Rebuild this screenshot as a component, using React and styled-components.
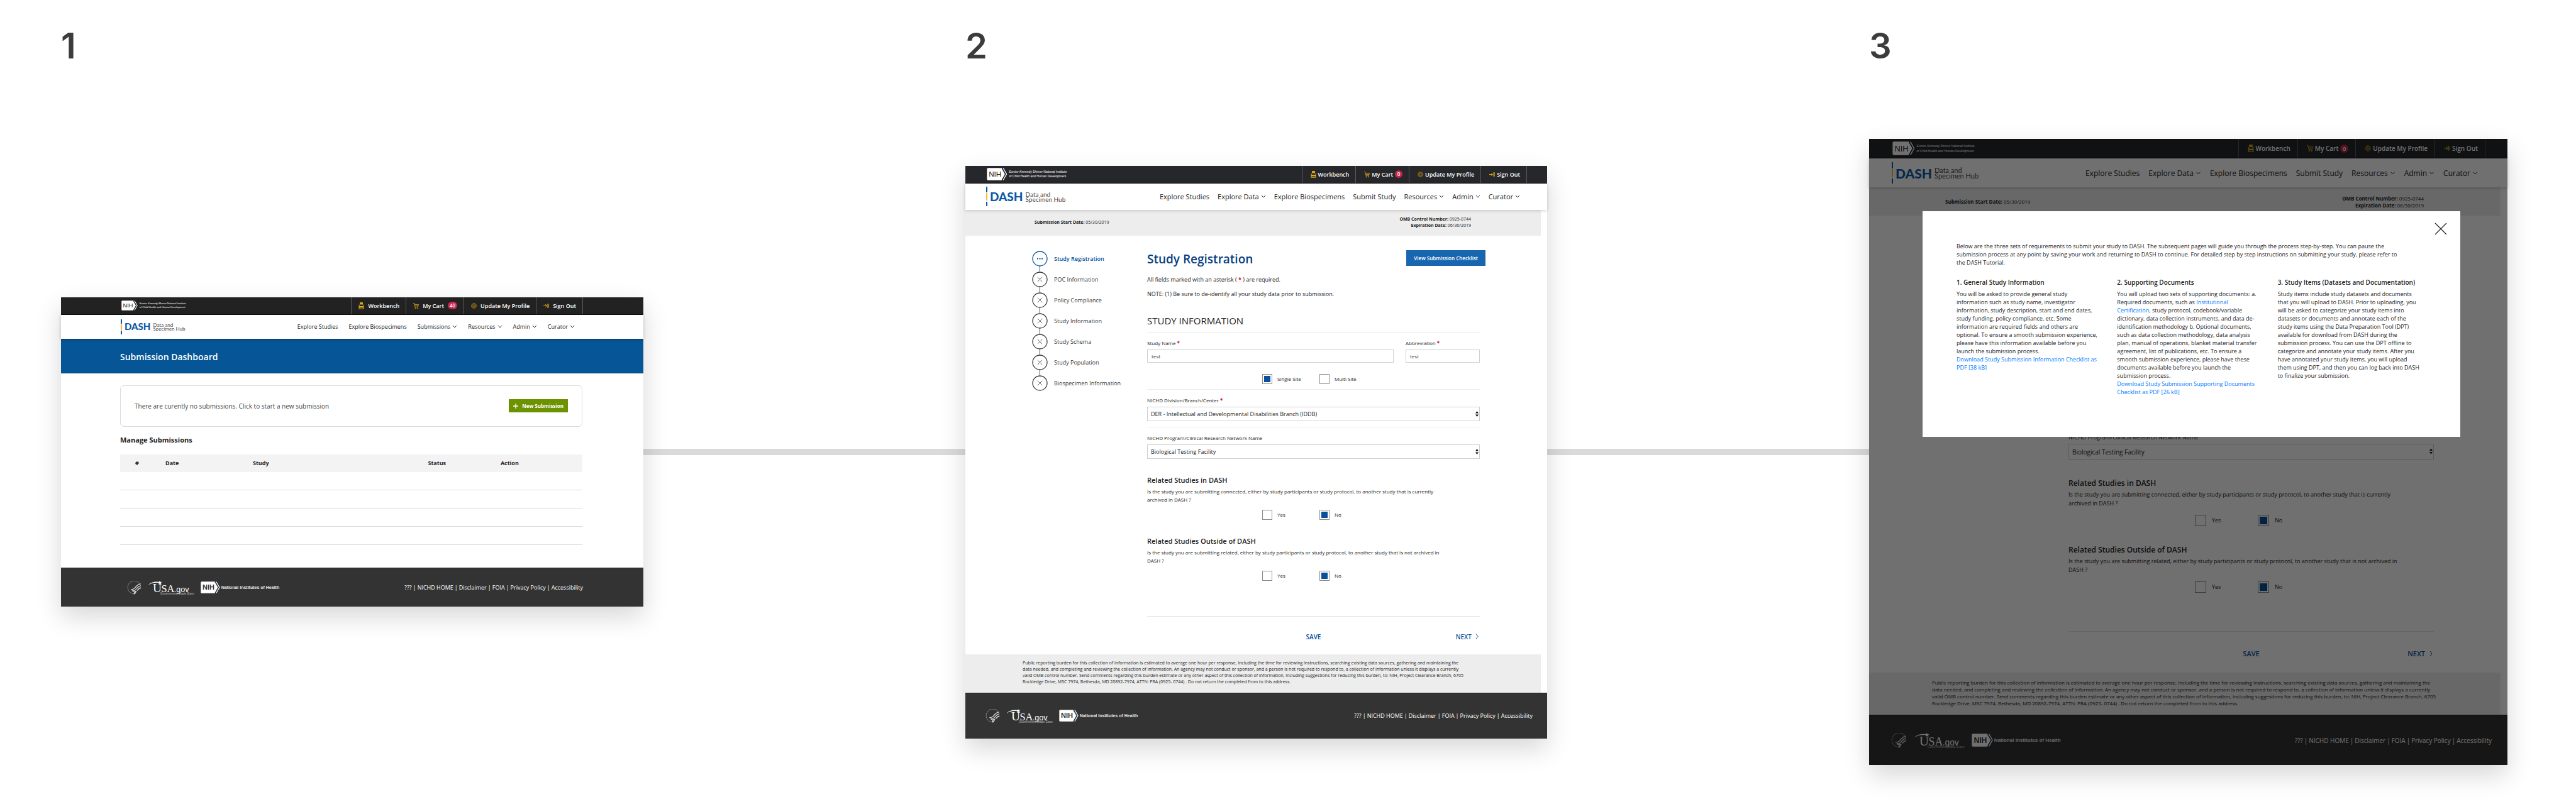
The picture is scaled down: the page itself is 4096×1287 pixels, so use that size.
import React, { useId, useState } from 'react'
import styled, { createGlobalStyle, ThemeProvider } from 'styled-components'

// whole pixel size, scaled for the panel it is used in
const u = (n) => ({ theme }) => `${Math.round(n * theme.scale)}px`

const dashboardTheme = {
  scale: 1,
  topBg: '#222222',
  left: 95,
  right: 96,
  itemLeft: 11,
  itemGap: 6,
  nihHeight: 16,
  nihFont: 4,
  navHeight: 38,
  navFont: 9,
  navGap: 17,
  navRight: 109,
  dashFont: 15,
  dashSub: 8,
  dashBar: 24,
  footerHeight: 62,
  footerLeft: 105,
  footerRight: 96,
}

const formTheme = {
  scale: 1,
  topBg: '#26272a',
  left: 33,
  right: 32,
  itemLeft: 13,
  itemGap: 3,
  nihHeight: 20,
  nihFont: 5,
  navHeight: 42,
  navFont: 11,
  navGap: 13,
  navRight: 43,
  dashFont: 19,
  dashSub: 10,
  dashBar: 31,
  footerHeight: 73,
  footerLeft: 32,
  footerRight: 23,
}

const modalTheme = { ...formTheme, scale: 1.097 }

const Global = createGlobalStyle`
  * { box-sizing: border-box; }
  body {
    margin: 0;
    background: #fff;
    font-family: "Open Sans", "Noto Sans", sans-serif;
    color: #222;
  }
  h1, h2, h3, p, ol { margin: 0; padding: 0; }
  button, input, select { font-family: inherit; color: inherit; }
  a { text-decoration: none; color: inherit; }
`

const Board = styled.main`
  display: grid;
  grid-template-columns: 97fr 926fr 512fr 925fr 512fr 1015fr 109fr;
  row-gap: 126px;
  align-items: center;
  padding: 51px 0 66px;
`

const Step = styled.h2`
  grid-column: ${(props) => props.$col};
  font-family: Inter, sans-serif;
  font-size: 56px;
  line-height: 44px;
  font-weight: 600;
  color: #3c3c3c;
`

const Connector = styled.div`
  grid-column: ${(props) => props.$col};
  grid-row: 2;
  height: 10px;
  background: #dadada;
`

const Panel = styled.section`
  grid-column: ${(props) => props.$col};
  grid-row: 2;
  position: relative;
  min-width: 0;
  background: #fff;
  box-shadow: 0 16px 38px rgba(0, 0, 0, 0.16);
`

/* top bar */

const TopBar = styled.div`
  display: flex;
  justify-content: space-between;
  height: ${u(28)};
  padding-left: ${({ theme }) => u(theme.left + 1)({ theme })};
  padding-right: ${({ theme }) => u(theme.right)({ theme })};
  background: ${({ theme }) => theme.topBg};
  border-bottom: 1px solid #0c0c0c;
  color: #fff;
`

const Institute = styled.a`
  display: flex;
  align-items: center;
  gap: ${u(3)};
  font-family: "Liberation Sans", Arial, sans-serif;
  font-size: ${({ theme }) => u(theme.nihFont)({ theme })};
  line-height: ${({ theme }) => u(theme.nihFont + 2)({ theme })};

  svg {
    height: ${({ theme }) => u(theme.nihHeight)({ theme })};
    width: auto;
  }
`

const TopLinks = styled.nav`
  display: flex;
  border-right: 1px solid #5a5a5a;
`

const TopLink = styled.a`
  display: flex;
  align-items: center;
  gap: ${({ theme }) => u(theme.itemGap)({ theme })};
  padding: 0 ${u(10)} 0 ${({ theme }) => u(theme.itemLeft)({ theme })};
  border-left: 1px solid #5a5a5a;
  font-size: ${u(9)};
  font-weight: 600;
  white-space: nowrap;

  svg {
    width: ${u(9)};
    height: ${u(11)};
  }
`

const Badge = styled.span`
  min-width: ${u(12)};
  height: ${u(12)};
  line-height: ${u(12)};
  padding: 0 ${u(3)};
  border-radius: ${u(6)};
  background: #c4264c;
  font-size: ${u(8)};
  text-align: center;
`

/* main navigation */

const NavBar = styled.header`
  position: relative;
  display: flex;
  align-items: center;
  justify-content: space-between;
  height: ${({ theme }) => u(theme.navHeight)({ theme })};
  padding-left: ${({ theme }) => u(theme.left)({ theme })};
  padding-right: ${({ theme }) => u(theme.navRight)({ theme })};
  background: #fff;
  box-shadow: 0 1px 5px rgba(0, 0, 0, 0.2);
`

const Logo = styled.a`
  display: flex;
  align-items: center;
  gap: ${u(4)};
  font-family: Lato, sans-serif;
  color: #4a4a4a;
  font-size: ${({ theme }) => u(theme.dashSub)({ theme })};
  line-height: ${({ theme }) => u(theme.dashSub - 2)({ theme })};

  strong {
    color: #0b5aa6;
    font-weight: 900;
    font-size: ${({ theme }) => u(theme.dashFont)({ theme })};
    line-height: 1;
  }
`

const LogoBar = styled.i`
  width: 2px;
  height: ${({ theme }) => u(theme.dashBar)({ theme })};
  background: linear-gradient(#0b5aa6 0 29%, #fff 29% 33%, #f7bd36 33% 72%, #fff 72% 76%, #0b5aa6 76%);
`

const Menu = styled.nav`
  display: flex;
  gap: ${({ theme }) => u(theme.navGap)({ theme })};
  font-size: ${({ theme }) => u(theme.navFont)({ theme })};
  white-space: nowrap;

  a {
    display: flex;
    align-items: center;
    gap: ${u(3)};
  }

  svg {
    width: ${u(8)};
    height: ${u(5)};
  }
`

/* footer */

const FooterBar = styled.footer`
  display: flex;
  align-items: center;
  justify-content: space-between;
  height: ${({ theme }) => u(theme.footerHeight)({ theme })};
  padding-left: ${({ theme }) => u(theme.footerLeft)({ theme })};
  padding-right: ${({ theme }) => u(theme.footerRight)({ theme })};
  background: #333;
  border-top: 1px solid #222;
  color: #fff;
`

const FooterLogos = styled.div`
  display: flex;
  align-items: center;
  gap: ${u(10)};
`

const Health = styled.a`
  display: flex;
  align-items: center;
  gap: ${u(2)};
  font-family: "Liberation Sans", Arial, sans-serif;
  font-size: ${u(7)};
  font-weight: 700;
  color: #e8e8e8;

  svg {
    width: auto;
    height: ${u(19)};
  }
`

const FooterLinks = styled.nav`
  display: flex;
  font-size: ${u(9)};
  white-space: nowrap;

  a + a::before {
    content: '|';
    margin: 0 ${u(2)};
  }
`

/* dashboard */

const Banner = styled.div`
  display: flex;
  align-items: center;
  height: 55px;
  padding: 2px 94px 0;
  background: #065596;
  border-top: 1px solid #04407d;
  border-bottom: 1px solid #04407d;

  h1 {
    color: #fff;
    font-size: 14px;
    font-weight: 600;
  }
`

const DashboardBody = styled.div`
  padding: 19px 97px 36px 94px;

  h2 {
    padding: 13px 0 15px;
    font-size: 11px;
    line-height: 16px;
    font-weight: 700;
  }
`

const EmptyCard = styled.div`
  display: flex;
  align-items: center;
  justify-content: space-between;
  height: 66px;
  padding: 0 22px;
  border: 1px solid #dcdcdc;
  border-radius: 6px;
  font-size: 10px;
  color: #444;
`

const NewButton = styled.button`
  display: flex;
  align-items: center;
  justify-content: center;
  gap: 6px;
  height: 21px;
  padding: 0 7px;
  border: 0;
  background: #6d9200;
  color: #fff;
  font-size: 8px;
  font-weight: 700;

  svg {
    width: 8px;
    height: 8px;
  }
`

const Table = styled.table`
  width: 100%;
  table-layout: fixed;
  border-collapse: collapse;

  th {
    height: 28px;
    padding: 0;
    background: #f3f3f3;
    font-size: 9px;
    font-weight: 700;
    text-align: left;
  }

  th:first-child { padding-left: 24px; }

  td {
    height: 29px;
    padding: 0;
    border-bottom: 1px solid #dcdcdc;
  }
`

/* registration form */

const InfoBand = styled.div`
  display: flex;
  align-items: center;
  justify-content: space-between;
  height: ${u(41)};
  margin-right: ${u(10)};
  padding: 0 ${u(111)} 0 ${u(110)};
  background: #ededed;
  font-size: ${u(7)};
  line-height: ${u(10)};
`

const RightText = styled.div`
  text-align: right;
`

const FormBody = styled.div`
  display: grid;
  grid-template-columns: ${u(183)} 1fr;
  padding: ${u(23)} ${u(107)} ${u(21)} ${u(106)};
`

const Steps = styled.ol`
  list-style: none;
  padding-top: ${u(1)};
`

const StepItem = styled.li`
  display: flex;
  align-items: flex-start;
  gap: ${u(10)};
  height: ${u(33)};
  font-size: ${u(9)};
  line-height: ${u(26)};
  font-weight: ${(props) => (props.$active ? 600 : 400)};
  color: ${(props) => (props.$active ? '#07509a' : '#3a3a3a')};

  svg {
    flex: none;
    width: ${u(25)};
    height: ${u(33)};
    overflow: hidden;
  }
`

const TitleRow = styled.div`
  display: flex;
  align-items: flex-start;
  justify-content: space-between;
  height: ${u(29)};
  margin-right: -${u(9)};

  h1 {
    color: #083f80;
    font-size: ${u(19)};
    line-height: ${u(29)};
    font-weight: 600;
  }
`

const ChecklistButton = styled.button`
  height: ${u(25)};
  padding: 0 ${u(12)};
  border: 0;
  background: #1866b0;
  color: #fff;
  font-size: ${u(8)};
  font-weight: 600;
`

const Notes = styled.div`
  padding-top: ${u(6)};
  font-size: ${u(9)};
  line-height: ${u(23)};
`

const Required = styled.b`
  color: #c8102e;
`

const SectionTitle = styled.h2`
  padding: ${u(22)} 0 ${u(9)};
  border-bottom: 1px solid #ebebeb;
  font-size: ${u(15)};
  line-height: ${u(18)};
  font-weight: 400;
`

const Group = styled.div`
  padding: ${u(12)} 0 ${(props) => u(props.$last ? 0 : props.$radios ? 8 : 9)};
  border-bottom: ${(props) => (props.$last ? 0 : 1)}px solid #ebebeb;
`

const FieldRow = styled.div`
  display: grid;
  grid-template-columns: 392fr 118fr;
  gap: ${u(19)};
`

const Field = styled.div`
  position: relative;
  display: flex;
  flex-direction: column;
  gap: ${u(5)};
  font-size: ${u(8)};

  label {
    line-height: ${u(10)};
  }

  input, select {
    width: 100%;
    border: 1px solid #d0d0d0;
    border-radius: 0;
    background: #fff;
    appearance: none;
  }

  input {
    height: ${u(21)};
    padding: 0 ${u(6)};
    font-size: ${u(8)};
    color: #444;
  }

  select {
    height: ${u(23)};
    padding: 0 ${u(5)};
    font-size: ${u(9)};
    font-weight: 500;
  }

  svg {
    position: absolute;
    right: ${u(2)};
    bottom: ${u(7)};
    width: ${u(5)};
    height: ${u(9)};
  }
`

const Radios = styled.div`
  display: flex;
  padding-left: ${u(183)};
  margin-top: ${(props) => u(props.$gap)};

  label {
    display: flex;
    align-items: center;
    gap: ${u(8)};
    width: ${u(91)};
    font-size: ${u(8)};
    line-height: ${u(16)};
  }

  input {
    appearance: none;
    width: ${u(16)};
    height: ${u(16)};
    margin: 0;
    padding: 2px;
    border: 1px solid #8c8c8c;
  }

  input:checked {
    background: #07509a content-box;
  }
`

const Related = styled.div`
  padding-top: ${u(27)};

  h3 {
    font-size: ${u(11)};
    line-height: ${u(14)};
    font-weight: 600;
  }

  p {
    margin-top: ${u(4)};
    padding-right: ${u(42)};
    font-size: ${u(8)};
    line-height: ${u(13)};
  }
`

const Actions = styled.div`
  display: grid;
  grid-template-columns: 1fr auto 1fr;
  margin-top: ${u(56)};
  padding-top: ${u(25)};
  border-top: 1px solid #e4e4e4;

  button {
    display: flex;
    align-items: center;
    gap: ${u(6)};
    grid-column: 2;
    padding: 0;
    border: 0;
    background: none;
    color: #07509a;
    font-size: ${u(10)};
    line-height: ${u(14)};
    font-weight: 600;
  }

  button:last-child {
    grid-column: 3;
    justify-self: end;
    padding-right: ${u(2)};
  }

  svg {
    width: ${u(5)};
    height: ${u(9)};
  }
`

const Burden = styled.p`
  margin-right: ${u(10)};
  padding: ${u(9)} ${u(80)} ${u(12)} ${u(91)};
  background: #ededed;
  font-size: ${u(7)};
  line-height: ${u(10)};
  white-space: nowrap;
`

/* modal */

const Overlay = styled.div`
  position: absolute;
  inset: 0;
  padding: 115px 75px 0 85px;
  background: rgba(0, 0, 0, 0.56);
`

const Dialog = styled.div`
  position: relative;
  height: 359px;
  padding: 49px 46px 0 54px;
  background: #fff;
  font-size: 9px;
  line-height: 13px;
`

const Intro = styled.p`
  padding-right: 43px;
`

const Close = styled.button`
  position: absolute;
  top: 18px;
  right: 21px;
  width: 20px;
  height: 20px;
  padding: 0;
  border: 0;
  background: none;

  svg {
    display: block;
    width: 20px;
    height: 20px;
  }
`

const Columns = styled.div`
  display: grid;
  grid-template-columns: repeat(3, minmax(0, 1fr));
  column-gap: 28px;
  padding: 19px 17px 0 0;

  h3 {
    padding-bottom: 5px;
    font-size: 10px;
    line-height: 13px;
    font-weight: 600;
    white-space: nowrap;
  }

  a {
    color: #007bff;
  }
`

const Chevron = () => (
  <svg viewBox="0 0 8 5" fill="none" stroke="currentColor" aria-hidden="true">
    <path d="M1 0.8 4 4 7 0.8" />
  </svg>
)

const Jar = () => (
  <svg viewBox="0 0 9 11" fill="none" stroke="#e3ac15" aria-hidden="true">
    <path d="M2.5.3h4v2.6h-4z" fill="#e3ac15" />
    <path d="M2.5 3.2 1 4.7v5.6h7V4.7L6.5 3.2" />
    <path d="M1 6h7v2.4H1z" fill="#e3ac15" stroke="none" />
  </svg>
)

const Cart = () => (
  <svg viewBox="0 0 9 11" fill="none" stroke="#d19a1c" strokeWidth="0.9" aria-hidden="true">
    <path d="M0 1.5h1.6l1.3 5.8h4.6L8.5 3.4H2.2M3 5.4h5" />
    <circle cx="3.5" cy="9.2" r="0.7" />
    <circle cx="7" cy="9.2" r="0.7" />
  </svg>
)

const Gear = () => (
  <svg viewBox="0 0 9 11" fill="none" stroke="#c18c14" strokeWidth="0.8" aria-hidden="true">
    <circle cx="4.5" cy="5.5" r="4" strokeDasharray="1.6 0.5" />
    <circle cx="4.5" cy="5.5" r="2.9" />
    <circle cx="4.5" cy="5.5" r="1.2" />
  </svg>
)

const Exit = () => (
  <svg viewBox="0 0 9 11" fill="none" stroke="#d9a316" aria-hidden="true">
    <path d="M0 5.5h5M3.2 3l2.3 2.5L3.2 8" />
    <path d="M6.8 2.2v6.6M8.4 2.2v6.6" strokeWidth="0.9" />
  </svg>
)

const Nih = ({ ink }) => (
  <svg viewBox="0 0 50 31" aria-label="NIH">
    <path d="M3 0.5h34l9 15-9 15H3Q.5 30.5.5 28V3Q.5.5 3 .5z" fill="#fff" />
    <path d="M37.5 0.8l8.3 14.7-8.3 14.7" fill="none" stroke={ink} strokeWidth="2" />
    <path d="M40.5 0.8l8.3 14.7-8.3 14.7" fill="none" stroke="#fff" strokeWidth="2" />
    <text x="5" y="22" fontFamily="Liberation Sans, sans-serif" fontSize="18" fill={ink}>NIH</text>
  </svg>
)

const Eagle = styled(({ className }) => (
  <svg className={className} viewBox="0 0 70 68" fill="none" stroke="#d8d8d8" aria-label="Health and Human Services">
    <path d="M66 24A32 32 0 1 0 34 64" strokeWidth="3" strokeDasharray="4 1.5" stroke="#a0a0a0" />
    <path d="M66 14C50 17 43 29 37 36 31 42 25 43 19 41M67 24C55 26 49 34 43 42 39 47 34 49 28 47M68 34C59 36 54 41 49 48M24 48c8 5 15 7 18 2M45 50c-2 7-5 11-9 15M36 53l-2 13" strokeWidth="4" />
  </svg>
))`
  width: ${u(23)};
  height: ${u(22)};
`

const UsaGov = styled(({ className }) => (
  <svg className={className} viewBox="0 0 235 70" fill="#fff" aria-label="USA.gov">
    <path d="M2 22C16 5 38 3 56 6l4-6 4 6 7-1-5 6 2 6-7-3-6 3 1-6C38 8 18 10 2 22z" />
    <text x="25" y="57" fontFamily="Liberation Serif, serif" fontSize="62">U</text>
    <text x="68" y="57" fontFamily="Liberation Serif, serif" fontSize="52">SA</text>
    <text x="133" y="57" fontFamily="Liberation Sans, sans-serif" fontSize="40">.gov</text>
    <text x="63" y="69" fontFamily="Liberation Sans, sans-serif" fontSize="16" fill="#bbb">Government Made Easy</text>
  </svg>
))`
  width: ${u(74)};
  height: ${u(22)};
`

const StepMark = ({ active, last }) => (
  <svg viewBox="0 0 25 33" fill="none" stroke="currentColor" aria-hidden="true">
    <circle cx="12.5" cy="12.5" r="11.5" strokeWidth="1.3" />
    {active
      ? <path d="M8 12.5h2M11.5 12.5h2M15 12.5h2" strokeWidth="2" />
      : <path d="M8.8 8.8l7.4 7.4M16.2 8.8l-7.4 7.4" strokeWidth="0.8" />}
    {!last && <path d="M12.5 24v9" />}
  </svg>
)

const Header = ({ cart, links }) => (
  <>
    <TopBar>
      <Institute href="#">
        <Nih ink="#222" />
        <span>
          <em>Eunice Kennedy Shriver</em> National Institute
          <br />
          of Child Health and Human Development
        </span>
      </Institute>
      <TopLinks>
        <TopLink href="#"><Jar />Workbench</TopLink>
        <TopLink href="#"><Cart />My Cart<Badge>{cart}</Badge></TopLink>
        <TopLink href="#"><Gear />Update My Profile</TopLink>
        <TopLink href="#"><Exit />Sign Out</TopLink>
      </TopLinks>
    </TopBar>
    <NavBar>
      <Logo href="#">
        <LogoBar />
        <strong>DASH</strong>
        <span>Data and<br />Specimen Hub</span>
      </Logo>
      <Menu>
        {links.map(([text, more]) => (
          <a href="#" key={text}>{text}{more && <Chevron />}</a>
        ))}
      </Menu>
    </NavBar>
  </>
)

const Footer = () => (
  <FooterBar>
    <FooterLogos>
      <Eagle />
      <UsaGov />
      <Health href="#"><Nih ink="#333" />National Institutes of Health</Health>
    </FooterLogos>
    <FooterLinks>
      {['???', 'NICHD HOME', 'Disclaimer', 'FOIA', 'Privacy Policy', 'Accessibility'].map((text) => (
        <a href="#" key={text}>{text}</a>
      ))}
    </FooterLinks>
  </FooterBar>
)

const dashboardLinks = [
  ['Explore Studies'],
  ['Explore Biospecimens'],
  ['Submissions', true],
  ['Resources', true],
  ['Admin', true],
  ['Curator', true],
]

const formLinks = [
  ['Explore Studies'],
  ['Explore Data', true],
  ['Explore Biospecimens'],
  ['Submit Study'],
  ['Resources', true],
  ['Admin', true],
  ['Curator', true],
]

const Dashboard = () => (
  <>
    <Header cart={40} links={dashboardLinks} />
    <Banner><h1>Submission Dashboard</h1></Banner>
    <DashboardBody>
      <EmptyCard>
        There are curently no submissions. Click to start a new submission
        <NewButton type="button">
          <svg viewBox="0 0 8 8" stroke="#fff" strokeWidth="1.3" aria-hidden="true">
            <path d="M4 0v8M0 4h8" />
          </svg>
          New Submission
        </NewButton>
      </EmptyCard>
      <h2>Manage Submissions</h2>
      <Table>
        <colgroup>
          <col style={{ width: '9.8%' }} />
          <col style={{ width: '18.9%' }} />
          <col style={{ width: '37.9%' }} />
          <col style={{ width: '15.7%' }} />
          <col />
        </colgroup>
        <thead>
          <tr>
            <th>#</th>
            <th>Date</th>
            <th>Study</th>
            <th>Status</th>
            <th>Action</th>
          </tr>
        </thead>
        <tbody>
          {[1, 2, 3, 4].map((row) => (
            <tr key={row}><td colSpan={5} /></tr>
          ))}
        </tbody>
      </Table>
    </DashboardBody>
    <Footer />
  </>
)

const RadioPair = ({ options, initial, gap = 10 }) => {
  const name = useId()
  const [value, setValue] = useState(initial)

  return (
    <Radios $gap={gap}>
      {options.map((option) => (
        <label key={option}>
          <input
            type="radio"
            name={name}
            checked={value === option}
            onChange={() => setValue(option)}
          />
          {option}
        </label>
      ))}
    </Radios>
  )
}

const TextField = ({ label, value }) => {
  const id = useId()
  return (
    <Field>
      <label htmlFor={id}>{label} <Required>*</Required></label>
      <input id={id} type="text" defaultValue={value} />
    </Field>
  )
}

const SelectField = ({ label, value, required }) => {
  const id = useId()
  return (
    <Field>
      <label htmlFor={id}>{label} {required && <Required>*</Required>}</label>
      <select id={id} defaultValue={value}>
        <option>{value}</option>
      </select>
      <svg viewBox="0 0 5 9" fill="#111" aria-hidden="true">
        <path d="M2.5 0 5 3.6H0zM2.5 9 0 5.4h5z" />
      </svg>
    </Field>
  )
}

const steps = [
  'Study Registration',
  'POC Information',
  'Policy Compliance',
  'Study Information',
  'Study Schema',
  'Study Population',
  'Biospecimen Information',
]

const Registration = () => (
  <>
    <Header cart={0} links={formLinks} />
    <InfoBand>
      <div><b>Submission Start Date:</b> 05/30/2019</div>
      <RightText>
        <b>OMB Control Number:</b> 0925-0744
        <br />
        <b>Expiration Date:</b> 06/30/2019
      </RightText>
    </InfoBand>
    <FormBody>
      <Steps>
        {steps.map((text, i) => (
          <StepItem key={text} $active={i === 0}>
            <StepMark active={i === 0} last={i === steps.length - 1} />
            {text}
          </StepItem>
        ))}
      </Steps>
      <div>
        <TitleRow>
          <h1>Study Registration</h1>
          <ChecklistButton type="button">View Submission Checklist</ChecklistButton>
        </TitleRow>
        <Notes>
          <p>All fields marked with an asterisk ( <Required>*</Required> ) are required.</p>
          <p>NOTE: (1) Be sure to de-identify all your study data prior to submission.</p>
        </Notes>
        <SectionTitle>STUDY INFORMATION</SectionTitle>
        <Group $radios>
          <FieldRow>
            <TextField label="Study Name" value="test" />
            <TextField label="Abbreviation" value="test" />
          </FieldRow>
          <RadioPair options={['Single Site', 'Multi Site']} initial="Single Site" gap={18} />
        </Group>
        <Group>
          <SelectField
            label="NICHD Division/Branch/Center"
            value="DER - Intellectual and Developmental Disabilities Branch (IDDB)"
            required
          />
        </Group>
        <Group $last>
          <SelectField label="NICHD Program/Clinical Research Network Name" value="Biological Testing Facility" />
        </Group>
        <Related>
          <h3>Related Studies in DASH</h3>
          <p>
            Is the study you are submitting connected, either by study participants or study protocol, to another
            study that is currently archived in DASH ?
          </p>
          <RadioPair options={['Yes', 'No']} initial="No" />
        </Related>
        <Related>
          <h3>Related Studies Outside of DASH</h3>
          <p>
            Is the study you are submitting related, either by study participants or study protocol, to another
            study that is not archived in DASH ?
          </p>
          <RadioPair options={['Yes', 'No']} initial="No" />
        </Related>
        <Actions>
          <button type="button">SAVE</button>
          <button type="button">
            NEXT
            <svg viewBox="0 0 5 9" fill="none" stroke="currentColor" aria-hidden="true">
              <path d="M1 0.5 4 4.5 1 8.5" />
            </svg>
          </button>
        </Actions>
      </div>
    </FormBody>
    <Burden>
      Public reporting burden for this collection of information is estimated to average one hour per response, including the time for reviewing instructions, searching existing data sources, gathering and maintaining the
      <br />
      data needed, and completing and reviewing the collection of information. An agency may not conduct or sponsor, and a person is not required to respond to, a collection of information unless it displays a currently
      <br />
      valid OMB control number. Send comments regarding this burden estimate or any other aspect of this collection of information, including suggestions for reducing this burden, to: NIH, Project Clearance Branch, 6705
      <br />
      Rockledge Drive, MSC 7974, Bethesda, MD 20892-7974, ATTN: PRA (0925- 0744) . Do not return the completed from to this address.
    </Burden>
    <Footer />
  </>
)

const ChecklistDialog = () => (
  <Overlay>
    <Dialog role="dialog" aria-label="Submission checklist">
      <Close type="button" aria-label="Close">
        <svg viewBox="0 0 20 20" stroke="#222" strokeWidth="1.2" aria-hidden="true">
          <path d="M1 1l18 18M19 1L1 19" />
        </svg>
      </Close>
      <Intro>
        Below are the three sets of requirements to submit your study to DASH. The subsequent pages will guide you
        through the process step-by-step. You can pause the submission process at any point by saving your work and
        returning to DASH to continue. For detailed step by step instructions on submitting your study, please refer
        to the DASH Tutorial.
      </Intro>
      <Columns>
        <div>
          <h3>1. General Study Information</h3>
          <p>
            You will be asked to provide general study information such as study name, investigator information,
            study description, start and end dates, study funding, policy compliance, etc. Some information are
            required fields and others are optional. To ensure a smooth submission experience, please have this
            information available before you launch the submission process.
          </p>
          <a href="#">Download Study Submission Information Checklist as PDF [38 kB]</a>
        </div>
        <div>
          <h3>2. Supporting Documents</h3>
          <p>
            You will upload two sets of supporting documents: a. Required documents, such as{' '}
            <a href="#">Institutional Certification</a>, study protocol, codebook/variable dictionary, data
            collection instruments, and data de-identification methodology b. Optional documents, such as data
            collection methodology, data analysis plan, manual of operations, blanket material transfer agreement,
            list of publications, etc. To ensure a smooth submission experience, please have these documents
            available before you launch the submission process.
          </p>
          <a href="#">Download Study Submission Supporting Documents Checklist as PDF [26 kB]</a>
        </div>
        <div>
          <h3>3. Study Items (Datasets and Documentation)</h3>
          <p>
            Study items include study datasets and documents that you will upload to DASH. Prior to uploading, you
            will be asked to categorize your study items into datasets or documents and annotate each of the study
            items using the Data Preparation Tool (DPT) available for download from DASH during the submission
            process. You can use the DPT offline to categorize and annotate your study items. After you have
            annotated your study items, you will upload them using DPT, and then you can log back into DASH to
            finalize your submission.
          </p>
        </div>
      </Columns>
    </Dialog>
  </Overlay>
)

const App = () => (
  <>
    <Global />
    <Board>
      <Step $col={2}>1</Step>
      <Step $col={4}>2</Step>
      <Step $col={6}>3</Step>
      <ThemeProvider theme={dashboardTheme}>
        <Panel $col={2}><Dashboard /></Panel>
      </ThemeProvider>
      <Connector $col={3} />
      <ThemeProvider theme={formTheme}>
        <Panel $col={4}><Registration /></Panel>
      </ThemeProvider>
      <Connector $col={5} />
      <ThemeProvider theme={modalTheme}>
        <Panel $col={6}>
          <Registration />
          <ChecklistDialog />
        </Panel>
      </ThemeProvider>
    </Board>
  </>
)

export default App
